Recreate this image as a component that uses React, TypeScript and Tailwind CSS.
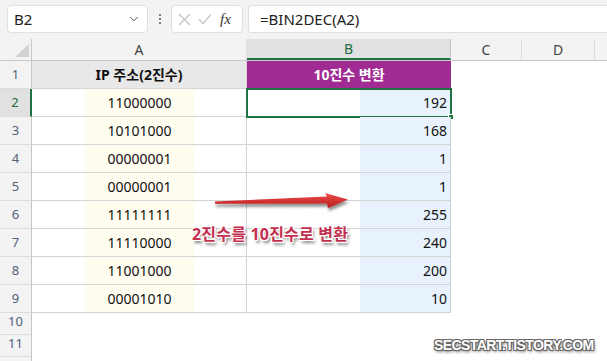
import { ChevronDown } from "lucide-react";

const FONT = { fontFamily: '"Noto Sans", "Noto Sans CJK KR", sans-serif' };

const rows = [
  { n: 2, bin: "11000000", dec: 192 },
  { n: 3, bin: "10101000", dec: 168 },
  { n: 4, bin: "00000001", dec: 1 },
  { n: 5, bin: "00000001", dec: 1 },
  { n: 6, bin: "11111111", dec: 255 },
  { n: 7, bin: "11110000", dec: 240 },
  { n: 8, bin: "11001000", dec: 200 },
  { n: 9, bin: "00001010", dec: 10 },
];

function RowHead({ n, selected, short }: { n?: number; selected?: boolean; short?: boolean }) {
  return (
    <div
      className={
        "w-[32px] shrink-0 flex items-end justify-center border-b border-b-[#dcdcdc] text-[13px] " +
        (short ? "pb-[3px] " : "pb-[4px] ") +
        (selected
          ? "bg-[#e1e1e1] text-[#1e6b3c] border-r-2 border-r-[#217346]"
          : "bg-[#f3f3f3] text-[#50607a] border-r border-r-[#c8c8c8]")
      }
    >
      {n}
    </div>
  );
}

export default function App() {
  return (
    <div className="w-[607px] h-[361px] overflow-hidden bg-white relative" style={FONT}>
      {/* formula bar */}
      <div className="h-[39px] bg-[#f3f3f3] flex items-start pt-[5px] pl-[7px] gap-[5px]">
        <div className="w-[141px] h-[28px] bg-white border border-[#e0e0e0] rounded-[4px] flex items-center pl-[6px] pr-[6px] justify-between">
          <span className="text-[15px] text-[#222]">B2</span>
          <ChevronDown size={14} strokeWidth={1.6} className="text-[#444]" />
        </div>
        <div className="w-[13px] h-[28px] flex flex-col items-center justify-center gap-[2px]">
          <span className="w-[2px] h-[2px] bg-[#555] rounded-full" />
          <span className="w-[2px] h-[2px] bg-[#555] rounded-full" />
          <span className="w-[2px] h-[2px] bg-[#555] rounded-full" />
        </div>
        <div className="w-[72px] h-[28px] bg-white border border-[#e0e0e0] rounded-[4px] flex items-center pl-[6px] gap-[7px]">
          <svg width="13" height="13" viewBox="0 0 13 13">
            <path d="M1 1 L12 12 M12 1 L1 12" stroke="#c4c4c4" strokeWidth="1.2" />
          </svg>
          <svg width="14" height="12" viewBox="0 0 14 12">
            <path d="M1 6 L5 10.5 L13 1.5" stroke="#c4c4c4" strokeWidth="1.2" fill="none" />
          </svg>
          <span
            className="text-[15px] italic text-[#333] ml-[1px]"
            style={{ fontFamily: '"Liberation Serif", serif' }}
          >
            fx
          </span>
        </div>
        <div className="flex-1 h-[28px] bg-white border border-[#e0e0e0] rounded-l-[4px] border-r-0 flex items-center pl-[11px]">
          <span className="text-[15px] text-[#222]">=BIN2DEC(A2)</span>
        </div>
      </div>

      {/* column headers */}
      <div className="flex h-[22px] bg-[#f3f3f3] text-[14px] text-[#444] border-b border-[#c8c8c8]">
        <div className="w-[32px] shrink-0 border-r border-[#c8c8c8] flex items-end justify-end pr-[2px] pb-[3px]">
          <svg width="14" height="13" viewBox="0 0 14 13">
            <path d="M14 0 L14 13 L0 13 Z" fill="#d2d2d2" />
          </svg>
        </div>
        <div className="w-[215px] shrink-0 flex items-center justify-center border-r border-[#dcdcdc]">A</div>
        <div className="w-[204px] shrink-0 flex items-center justify-center bg-[#e1e1e1] text-[#1e6b3c] border-b-2 border-[#217346] border-r border-r-[#c8c8c8]">
          B
        </div>
        <div className="w-[71px] shrink-0 flex items-center justify-center border-r border-[#dcdcdc]">C</div>
        <div className="w-[73px] shrink-0 flex items-center justify-center border-r border-[#dcdcdc]">D</div>
        <div className="flex-1" />
      </div>

      {/* row 1 */}
      <div className="flex h-[28px]">
        <RowHead n={1} />
        <div className="w-[215px] shrink-0 bg-[#e8e8e8] border-b border-r border-[#d4d4d4] flex items-center justify-center text-[14px] font-bold text-[#111]">
          IP 주소(2진수)
        </div>
        <div className="w-[204px] shrink-0 bg-[#a02b93] border-b border-[#d4d4d4] flex items-center justify-center text-[14px] font-bold text-white">
          10진수 변환
        </div>
      </div>

      {rows.map((r) => (
        <div key={r.n} className="flex h-[28px]">
          <RowHead n={r.n} selected={r.n === 2} />
          <div className="w-[215px] shrink-0 border-b border-r border-[#d4d4d4] flex">
            <div className="ml-[53px] w-[109px] bg-[#fefdf0] flex items-center justify-center text-[14px] text-[#111]">
              {r.bin}
            </div>
          </div>
          <div className="w-[204px] shrink-0 border-b border-r border-[#d4d4d4] flex justify-end relative">
            <div className="w-[90px] bg-[#e7f2fc] flex items-center justify-end pr-[3px] text-[14px] text-[#111]">
              {r.dec}
            </div>
            {r.n === 2 && (
              <div className="absolute -left-px -top-px w-[206px] h-[30px] border-2 border-[#217346]">
                <div className="absolute -right-[4px] -bottom-[4px] w-[6px] h-[6px] bg-[#217346] border border-white" />
              </div>
            )}
          </div>
        </div>
      ))}

      <div className="flex h-[22px]">
        <RowHead n={10} short />
      </div>
      <div className="flex h-[22px]">
        <RowHead n={11} short />
      </div>
      <div className="flex h-[10px]">
        <RowHead short />
      </div>

      {/* annotation arrow */}
      <svg className="absolute left-[210px] top-[188px]" width="146" height="28" viewBox="210 188 146 28">
        <defs>
          <linearGradient id="ag" x1="0" y1="0" x2="0" y2="1">
            <stop offset="0" stopColor="#f05050" />
            <stop offset="1" stopColor="#b81818" />
          </linearGradient>
          <filter id="sh" x="-10%" y="-50%" width="120%" height="200%">
            <feDropShadow dx="1" dy="3" stdDeviation="1.6" floodColor="#000" floodOpacity="0.45" />
          </filter>
        </defs>
        <polygon
          points="215,201.5 327,196.5 325,193 348,199.5 328,208 327,203.5 215,203.8"
          fill="url(#ag)"
          filter="url(#sh)"
        />
      </svg>

      <div className="absolute left-[192px] top-[222px] text-[16px] font-bold text-[#c42f50] tracking-[0.2px] [text-shadow:1px_1px_0_#fff,-1px_-1px_0_#fff,1px_-1px_0_#fff,-1px_1px_0_#fff,0_1px_0_#fff,1px_0_0_#fff,2px_3px_3px_rgba(0,0,0,0.55)]">
        2진수를 10진수로 변환
      </div>

      <div
        className="absolute left-[434px] top-[335px] text-[14px] font-bold text-white tracking-[-0.6px] [text-shadow:1px_1px_0_#666,-1px_-1px_0_#666,1px_-1px_0_#666,-1px_1px_0_#666,1px_2px_3px_rgba(0,0,0,0.6)]"
        style={{ fontFamily: '"Liberation Sans", sans-serif' }}
      >
        SECSTART.TISTORY.COM
      </div>
    </div>
  );
}
